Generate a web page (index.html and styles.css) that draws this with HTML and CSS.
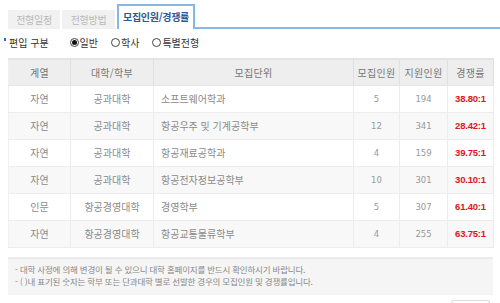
FILE: index.html
```html
<!DOCTYPE html>
<html lang="ko">
<head>
<meta charset="utf-8">
<link rel="stylesheet" href="styles.css">
</head>
<body>
<div class="page">
  <div class="tabs">
    <div class="tab">전형일정</div>
    <div class="tab">전형방법</div>
    <div class="tab active">모집인원/경쟁률</div>
    <div class="tab-rest"></div>
  </div>
  <div class="filter">
    <span class="bullet"></span><span class="label">편입 구분</span>
    <label class="radio checked"><span class="circle"></span>일반</label>
    <label class="radio"><span class="circle"></span>학사</label>
    <label class="radio"><span class="circle"></span>특별전형</label>
  </div>
  <table class="grid">
    <colgroup>
      <col class="c1"><col class="c2"><col class="c3"><col class="c4"><col class="c5"><col class="c6">
    </colgroup>
    <thead>
      <tr><th>계열</th><th>대학/학부</th><th>모집단위</th><th>모집인원</th><th>지원인원</th><th>경쟁률</th></tr>
    </thead>
    <tbody>
      <tr><td>자연</td><td>공과대학</td><td class="unit">소프트웨어학과</td><td class="num">5</td><td class="num">194</td><td class="rate">38.80:1</td></tr>
      <tr><td>자연</td><td>공과대학</td><td class="unit">항공우주 및 기계공학부</td><td class="num">12</td><td class="num">341</td><td class="rate">28.42:1</td></tr>
      <tr><td>자연</td><td>공과대학</td><td class="unit">항공재료공학과</td><td class="num">4</td><td class="num">159</td><td class="rate">39.75:1</td></tr>
      <tr><td>자연</td><td>공과대학</td><td class="unit">항공전자정보공학부</td><td class="num">10</td><td class="num">301</td><td class="rate">30.10:1</td></tr>
      <tr><td>인문</td><td>항공경영대학</td><td class="unit">경영학부</td><td class="num">5</td><td class="num">307</td><td class="rate">61.40:1</td></tr>
      <tr><td>자연</td><td>항공경영대학</td><td class="unit">항공교통물류학부</td><td class="num">4</td><td class="num">255</td><td class="rate">63.75:1</td></tr>
    </tbody>
  </table>
  <div class="note">
    <p>- 대학 사정에 의해 변경이 될 수 있으니 대학 홈페이지를 반드시 확인하시기 바랍니다.</p>
    <p>- ( )내 표기된 숫자는 학부 또는 단과대학 별로 선발한 경우의 모집인원 및 경쟁률입니다.</p>
  </div>
  <div class="bottom"><span class="btn"></span></div>
</div>
</body>
</html>
```

FILE: styles.css
```css
* { box-sizing: border-box; }
html, body { margin: 0; padding: 0; background: #fff; }
body {
  font-family: "Noto Sans CJK KR", "Noto Sans", sans-serif;
  font-size: 11px;
  color: #777;
}
.page { padding: 0 7px 0 8px; width: 500px; }

.tabs { display: flex; align-items: flex-end; height: 29px; margin-right: -7px; }
.tab {
  width: 52px; height: 19px; margin-right: 2px;
  background: #f1f1f1; color: #b8b8b8;
  font-size: 10px; line-height: 19px; text-align: center;
  letter-spacing: -0.3px;
}
.tab:nth-child(2) { width: 53px; }
.tab.active {
  width: 78px; height: 25px; line-height: 22px; margin-right: 0;
  background: #fff; color: #2a5a9a; font-weight: bold;
  border: 2px solid #86b8e6; border-bottom: none;
}
.tab-rest { flex: 1; border-bottom: 2px solid #86b8e6; }

.filter {
  display: flex; align-items: center; height: 26px; margin-left: -4px;
  font-size: 10px; color: #333;
}
.bullet { width: 2px; height: 3px; background: #2c6bd0; margin-right: 3px; position: relative; top: -3px; }
.label { margin-right: 21px; }
.radio { display: flex; align-items: center; margin-right: 13px; }
.radio .circle {
  width: 9px; height: 9px; border: 1px solid #444; border-radius: 50%;
  margin-right: 1px; display: flex; align-items: center; justify-content: center;
}
.radio.checked .circle::after {
  content: ""; width: 5px; height: 5px; border-radius: 50%; background: #111;
}

.grid {
  width: 485px; border-collapse: collapse; margin-top: 3px;
  table-layout: fixed; border-top: 2px solid #e4e4e4;
}
.c1 { width: 62px; } .c2 { width: 83px; } .c3 { width: 200px; }
.c4 { width: 46px; } .c5 { width: 48px; } .c6 { width: 46px; }
.grid th {
  height: 26px; background: #eee; color: #777; font-weight: normal;
  font-size: 10px; border-left: 1px solid #e0e0e0; border-right: 1px solid #e0e0e0;
  border-bottom: 1px solid #e6e6e6; letter-spacing: 0.3px;
}
.grid td {
  height: 27px; text-align: center; font-size: 10px; color: #8a8a8a;
  border: 1px solid #ececec; padding: 0;
}
.grid tbody tr:nth-child(even) td { background: #f8f8f8; }
.grid td.unit { text-align: left; padding-left: 7px; }
.grid td.num { font-family: "DejaVu Sans", sans-serif; font-size: 8.5px; color: #999; }
.grid td.rate {
  font-family: "Liberation Sans", Arial, sans-serif; font-size: 9.5px;
  color: #e0141e; font-weight: bold; letter-spacing: -0.2px;
}
.grid tr > *:first-child { border-left-color: #f0f0f0; }

.note {
  width: 485px; margin-top: 9px; background: #f5f5f5;
  border-top: 2px solid #ebebeb; padding: 4px 7px 0;
  font-size: 8.5px; color: #888; line-height: 12px; height: 38px;
}
.note p { margin: 0; letter-spacing: -0.2px; }
.bottom { display: flex; justify-content: flex-end; height: 10px; padding-top: 5px; }
.btn { width: 39px; height: 10px; border: 1px solid #ddd; border-bottom: none; border-radius: 3px 3px 0 0; margin-right: 3px; }
```
